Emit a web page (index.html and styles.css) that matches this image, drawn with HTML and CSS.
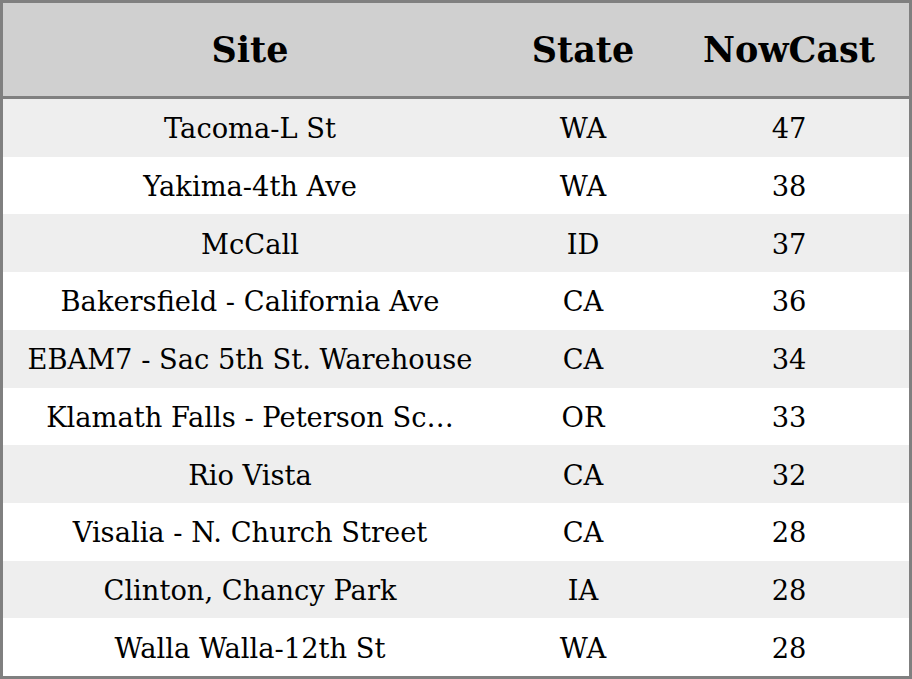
FILE: index.html
```html
<!DOCTYPE html>
<html>
<head>
<meta charset="utf-8">
<link rel="stylesheet" href="styles.css">
</head>
<body>
<div class="table">
  <div class="row head">
    <div class="cell">Site</div>
    <div class="cell">State</div>
    <div class="cell">NowCast</div>
  </div>
  <div class="body">
    <div class="row"><div class="cell">Tacoma-L St</div><div class="cell">WA</div><div class="cell">47</div></div>
    <div class="row"><div class="cell">Yakima-4th Ave</div><div class="cell">WA</div><div class="cell">38</div></div>
    <div class="row"><div class="cell">McCall</div><div class="cell">ID</div><div class="cell">37</div></div>
    <div class="row"><div class="cell">Bakersfield - California Ave</div><div class="cell">CA</div><div class="cell">36</div></div>
    <div class="row"><div class="cell">EBAM7 - Sac 5th St. Warehouse</div><div class="cell">CA</div><div class="cell">34</div></div>
    <div class="row"><div class="cell">Klamath Falls - Peterson Sc…</div><div class="cell">OR</div><div class="cell">33</div></div>
    <div class="row"><div class="cell">Rio Vista</div><div class="cell">CA</div><div class="cell">32</div></div>
    <div class="row"><div class="cell">Visalia - N. Church Street</div><div class="cell">CA</div><div class="cell">28</div></div>
    <div class="row"><div class="cell">Clinton, Chancy Park</div><div class="cell">IA</div><div class="cell">28</div></div>
    <div class="row"><div class="cell">Walla Walla-12th St</div><div class="cell">WA</div><div class="cell">28</div></div>
  </div>
</div>
</body>
</html>
```
FILE: styles.css
```css
html, body {
  margin: 0;
  padding: 0;
  background: #ffffff;
}
.table {
  width: 912px;
  height: 679px;
  box-sizing: border-box;
  border: 3px solid #808080;
  display: flex;
  flex-direction: column;
  font-family: "DejaVu Serif", serif;
  color: #000;
}
.row {
  display: grid;
  grid-template-columns: 494px 172px 240px;
  align-items: center;
}
.cell {
  text-align: center;
  white-space: nowrap;
}
.head {
  height: 93px;
  flex: none;
  background: #d0d0d0;
  border-bottom: 3px solid #808080;
  font-weight: bold;
  font-size: 35px;
}
.body {
  flex: 1;
  display: flex;
  flex-direction: column;
}
.body .row {
  flex: 1;
  font-size: 27.3px;
  padding-top: 2px;
}
.body .row:nth-child(odd) {
  background: #eeeeee;
}
```
